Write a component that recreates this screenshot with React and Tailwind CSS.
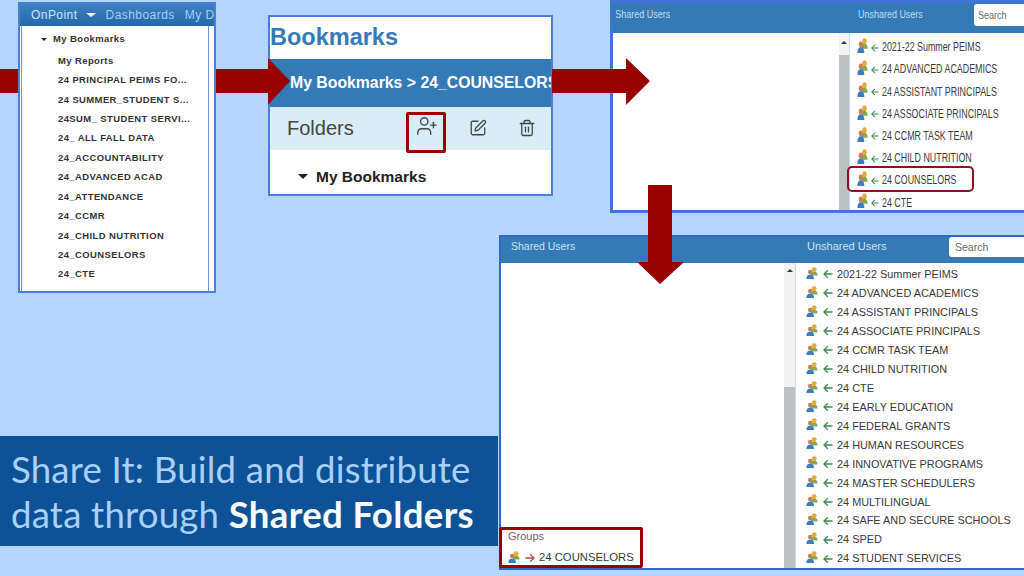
import { SquarePen, Trash2, UserPlus } from "lucide-react";

const bookmarks = [
  "My Reports",
  "24 PRINCIPAL PEIMS FO...",
  "24 SUMMER_STUDENT S...",
  "24SUM_ STUDENT SERVI...",
  "24_ ALL FALL DATA",
  "24_ACCOUNTABILITY",
  "24_ADVANCED ACAD",
  "24_ATTENDANCE",
  "24_CCMR",
  "24_CHILD NUTRITION",
  "24_COUNSELORS",
  "24_CTE",
];

const smallList = [
  "2021-22 Summer PEIMS",
  "24 ADVANCED ACADEMICS",
  "24 ASSISTANT PRINCIPALS",
  "24 ASSOCIATE PRINCIPALS",
  "24 CCMR TASK TEAM",
  "24 CHILD NUTRITION",
  "24 COUNSELORS",
  "24 CTE",
];

const bigList = [
  "2021-22 Summer PEIMS",
  "24 ADVANCED ACADEMICS",
  "24 ASSISTANT PRINCIPALS",
  "24 ASSOCIATE PRINCIPALS",
  "24 CCMR TASK TEAM",
  "24 CHILD NUTRITION",
  "24 CTE",
  "24 EARLY EDUCATION",
  "24 FEDERAL GRANTS",
  "24 HUMAN RESOURCES",
  "24 INNOVATIVE PROGRAMS",
  "24 MASTER SCHEDULERS",
  "24 MULTILINGUAL",
  "24 SAFE AND SECURE SCHOOLS",
  "24 SPED",
  "24 STUDENT SERVICES",
];

function GroupIcon({ className }) {
  return (
    <svg viewBox="0 0 12 12" preserveAspectRatio="none" className={className}>
      <circle cx="8.2" cy="2.6" r="2.4" fill="#e3ab3a" />
      <path d="M5 8.5c0-2.8 1.2-4 3.2-4s3.4 1.2 3.4 4z" fill="#86a94a" />
      <circle cx="4.2" cy="5" r="2.3" fill="#c4804f" />
      <path d="M.4 12c0-3 1.4-4.6 3.8-4.6S8 9 8 12z" fill="#3b7cc4" />
    </svg>
  );
}

function SideArrow({ className }) {
  return (
    <svg viewBox="0 0 10 10" className={className}>
      <path d="M9.5 5H1M4.8 1.2 1 5l3.8 3.8" fill="none" stroke="currentColor" strokeWidth="1.3" />
    </svg>
  );
}

function Row({ name, height, text, gap, icon, arrow }) {
  return (
    <div className={`flex items-center ${height} ${gap} text-[#3a3a3a]`}>
      <GroupIcon className={icon} />
      <SideArrow className={`${arrow} text-[#3d8a4f]`} />
      <span className={`whitespace-nowrap inline-block origin-left ${text}`}>{name}</span>
    </div>
  );
}

export default function App() {
  return (
    <div className="relative w-[1024px] h-[576px] overflow-hidden bg-[#b4d5fd] font-['Liberation_Sans',sans-serif]">
      {/* arrow shaft sits under the panels */}
      <svg viewBox="0 0 1024 576" className="absolute inset-0 w-[1024px] h-[576px]">
        <path d="M0 69H270V93H0Z" fill="#990000" />
      </svg>

      {/* NAV PANEL */}
      <div className="absolute left-[18px] top-[2px] w-[198px] h-[291px] border-[2px] border-[#4a7edb] bg-white flex flex-col overflow-hidden">
        <div className="h-[22px] shrink-0 flex items-start pt-[2px] gap-[10px] pl-[11px] text-[12px] tracking-[0.45px] text-[#a5cdf2] bg-gradient-to-b from-[#3e80c0] to-[#2469ab] whitespace-nowrap">
          <span className="flex items-center gap-[8px] text-[#cfe4f8]">
            OnPoint
            <span className="w-0 h-0 border-x-[5px] border-x-transparent border-t-[4px] border-t-white" />
          </span>
          <span>Dashboards</span>
          <span>My D</span>
        </div>
        <div className="flex-1 ml-[1px] mr-[5px] border-x-[1px] border-[#6f96d8] pl-[19px] pt-[8px] text-[9.45px] font-bold tracking-[0.42px] text-[#333333]">
          <div className="flex items-center gap-[6px] h-[10px] mb-[5px] whitespace-nowrap">
            <span className="w-0 h-0 border-x-[3px] border-x-transparent border-t-[3px] border-t-[#222222]" />
            My Bookmarks
          </div>
          <div className="pl-[17px] pt-[2px]">
            {bookmarks.map(b => (
              <div key={b} className="h-[19.45px] flex items-center whitespace-nowrap">{b}</div>
            ))}
          </div>
        </div>
      </div>

      {/* BOOKMARKS PANEL */}
      <div className="absolute left-[268px] top-[15px] w-[285px] h-[181px] border-[2px] border-[#4a7edb] bg-white flex flex-col overflow-hidden">
        <div className="h-[42px] shrink-0 flex items-start text-[23.5px] leading-[40px] font-bold text-[#337ab7]">Bookmarks</div>
        <div className="h-[48px] shrink-0 flex items-center pl-[20px] text-[15.8px] font-bold text-white bg-[#337ab7] whitespace-nowrap">
          My Bookmarks &gt; 24_COUNSELORS
        </div>
        <div className="h-[43px] shrink-0 flex items-center pl-[17px] pb-[2px] bg-[#d9edf7] text-[#444444]">
          <span className="text-[20px] w-[129px]">Folders</span>
          <UserPlus className="w-[22px] h-[22px] -mt-[3px]" strokeWidth={1.5} />
          <SquarePen className="w-[18px] h-[18px] ml-[31px]" strokeWidth={1.7} />
          <Trash2 className="w-[18px] h-[18px] ml-[31px]" strokeWidth={1.7} />
        </div>
        <div className="flex items-center gap-[8px] pl-[28px] pt-[15px] text-[15.5px] font-bold text-[#222222]">
          <span className="w-0 h-0 border-x-[5px] border-x-transparent border-t-[5px] border-t-[#222222]" />
          My Bookmarks
        </div>
      </div>

      {/* head of the first arrow and the icon highlight lie over the panel */}
      <svg viewBox="0 0 1024 576" className="absolute inset-0 w-[1024px] h-[576px]">
        <path d="M268 58 290 81 268 105Z" fill="#990000" />
      </svg>
      <div className="absolute left-[406px] top-[112px] w-[40px] h-[41px] border-[3px] border-[#990000] rounded-[2px]" />

      {/* UNSHARED PANEL SMALL */}
      <div className="absolute left-[610px] top-0 w-[420px] h-[213px] border-[3px] border-[#4173d8] bg-white flex flex-col overflow-hidden">
        <div className="h-[30px] shrink-0 flex items-start bg-[#337ab7] text-[11.5px] leading-[16px] pt-[3px] text-[#c4dcf2]">
          <span className="pl-[3px] w-[245px] shrink-0 inline-block origin-left scale-x-[0.78] whitespace-nowrap">Shared Users</span>
          <span className="w-[116px] shrink-0 inline-block origin-left scale-x-[0.78] whitespace-nowrap">Unshared Users</span>
          <div className="w-[60px] h-[22px] shrink-0 -mt-[2px] bg-white rounded-[3px] pl-[4px] flex items-center text-[#666666]">
            <span className="inline-block origin-left scale-x-[0.78]">Search</span>
          </div>
        </div>
        <div className="flex flex-1 min-h-0">
          <div className="w-[226px] shrink-0" />
          <div className="w-[10px] shrink-0 flex flex-col bg-[#bcc2c2]">
            <div className="h-[22px] bg-[#f4f4f4] flex justify-center pt-[8px]">
              <span className="w-0 h-0 border-x-[3px] border-x-transparent border-b-[3px] border-b-[#333333]" />
            </div>
          </div>
          <div className="flex-1 pl-[7px] pt-[3.5px] border-l-[1px] border-[#c9ddf5]">
            {smallList.map(n => (
              <Row key={n} name={n} height="h-[22.2px]" text="text-[12.5px] scale-x-[0.71]" gap="gap-[3px]" icon="w-[11px] h-[15px] -mt-[4px]" arrow="w-[8px] h-[8px]" />
            ))}
          </div>
        </div>
      </div>

      {/* counselors highlight */}
      <div className="absolute left-[847px] top-[166px] w-[127px] h-[26px] border-[2px] border-[#8f1020] rounded-[5px]" />

      <svg viewBox="0 0 1024 576" className="absolute inset-0 w-[1024px] h-[576px]">
        <path d="M552 69H626V58L650 81 626 105V93H552Z" fill="#990000" />
      </svg>

      {/* UNSHARED PANEL LARGE */}
      <div className="absolute left-[499px] top-[235px] w-[530px] h-[335px] border-[2px] border-[#2f69c6] bg-white flex flex-col overflow-hidden">
        <div className="h-[26px] shrink-0 flex items-start bg-[#337ab7] pt-[2px] text-[10.5px] leading-[14px] text-[#cde2f5]">
          <span className="pl-[10px] w-[306px] shrink-0">Shared Users</span>
          <span className="w-[142px] shrink-0 text-[11px]">Unshared Users</span>
          <div className="w-[80px] h-[20px] shrink-0 -mt-[2px] bg-white rounded-[3px] pl-[6px] flex items-center text-[#666666]">Search</div>
        </div>
        <div className="flex flex-1 min-h-0">
          <div className="w-[283px] shrink-0 flex flex-col justify-end pl-[7px] pb-[2px]">
            <div className="text-[11px] text-[#666666] mb-[5px]">Groups</div>
            <div className="flex items-center text-[11.3px] text-[#3a3a3a]">
              <GroupIcon className="w-[12px] h-[12px] -mt-[2px]" />
              <SideArrow className="w-[10px] h-[10px] ml-[5px] rotate-180 text-[#c0474a]" />
              <span className="ml-[4px]">24 COUNSELORS</span>
            </div>
          </div>
          <div className="w-[11px] shrink-0 flex flex-col bg-[#f2f2f2]">
            <div className="h-[124px] flex justify-center pt-[6px]">
              <span className="w-0 h-0 border-x-[3px] border-x-transparent border-b-[3px] border-b-[#333333]" />
            </div>
            <div className="flex-1 bg-[#bcc0c0]" />
          </div>
          <div className="flex-1 pl-[10px] pt-[2px] border-l-[1px] border-[#c9ddf5]">
            {bigList.map(n => (
              <Row key={n} name={n} height="h-[18.95px]" text="text-[10.9px]" gap="gap-[4.5px]" icon="w-[12px] h-[12px] -mt-[3px]" arrow="w-[10px] h-[10px]" />
            ))}
          </div>
        </div>
      </div>

      {/* groups highlight */}
      <div className="absolute left-[499px] top-[527px] w-[144px] h-[41px] border-[3px] border-[#990000] rounded-[2px]" />

      <svg viewBox="0 0 1024 576" className="absolute inset-0 w-[1024px] h-[576px]">
        <path d="M648 185H672V262H684L660 284 637 262H648Z" fill="#990000" />
      </svg>

      {/* CAPTION */}
      <div className="absolute left-0 top-[436px] w-[498px] h-[110px] bg-[#0d5296] pl-[11px] pt-[11px] font-['Lato',sans-serif] text-[36.6px] leading-[45px] tracking-[0.2px] text-[#a9d0fb]">
        <div className="whitespace-nowrap">Share It: Build and distribute</div>
        <div className="whitespace-nowrap">data through <span className="font-bold text-white tracking-[0.35px]">Shared Folders</span></div>
      </div>
    </div>
  );
}
